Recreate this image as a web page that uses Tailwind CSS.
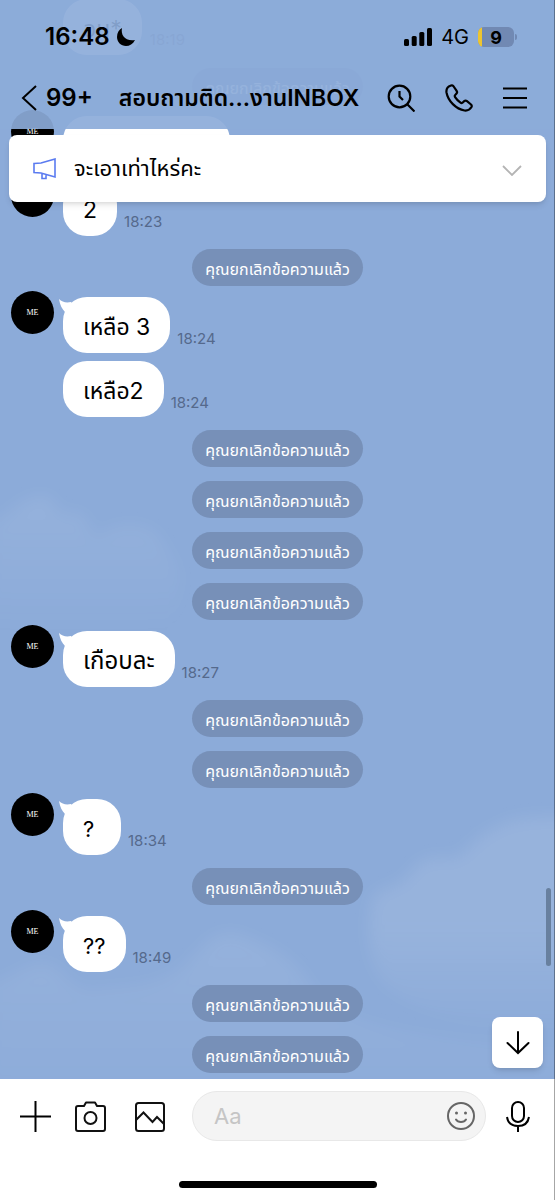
<!DOCTYPE html>
<html lang="th">
<head>
<meta charset="utf-8">
<meta name="viewport" content="width=device-width, initial-scale=1">
<title>Chat</title>
<script src="https://cdn.jsdelivr.net/npm/@tailwindcss/browser@4"></script>
</head>
<body class="bg-white font-['Inter','Noto_Sans_Thai','Noto_Sans',sans-serif] text-black">
<div class="relative flex min-h-screen flex-col overflow-hidden">

  <!-- Conversation -->
  <main class="relative flex flex-col overflow-hidden bg-[#8cabd9] pb-[6px]">
    <svg class="absolute inset-0 h-full w-full" viewBox="0 0 555 1079" preserveAspectRatio="none" aria-hidden="true">
      <defs>
        <filter id="soft" x="-20%" y="-20%" width="140%" height="140%"><feGaussianBlur stdDeviation="8"/></filter>
        <linearGradient id="fade" x1="0" y1="0" x2="0" y2="1"><stop offset="0" stop-color="#fff" stop-opacity=".08"/><stop offset="1" stop-color="#fff" stop-opacity="0"/></linearGradient>
        <linearGradient id="fade2" x1="0" y1="0" x2="0" y2="1"><stop offset="0" stop-color="#fff" stop-opacity=".1"/><stop offset=".5" stop-color="#fff" stop-opacity=".1"/><stop offset="1" stop-color="#fff" stop-opacity="0"/></linearGradient>
      </defs>
      <g filter="url(#soft)">
        <path fill="url(#fade)" d="M-10 522C8 520 15 500 42 496c18 2 10 20 24 18 20-6 22 10 26 22 12 0 20-14 46-10 26 4 24 22 36 34 12 20 4 60-10 70H-10z"/>
        <path fill="url(#fade2)" d="M575 818c-30-2-70 0-80 12-14 2-22 18-38 28-10 4-26-8-44 12-6 14-24 18-38 24-10 30-6 70 10 90 30 30 100 50 190 50z"/>
        <path fill="url(#fade)" d="M-10 984c20-4 40-22 56-20 16 4 26 30 50 26 30-4 60-2 84-20 20-16 30-40 56-36 40 14 60 26 80 60 20 30 120 50 259 54v70H-10z"/>
      </g>
    </svg>

    <ol class="relative flex flex-col">
      <li class="-mt-px flex items-end gap-2 pl-[63px]"><p class="flex h-14 items-center rounded-[24px] bg-white px-5 pt-1 text-[23px]">อน*</p><time class="pb-1 text-[15px] text-[#55698c]">18:19</time></li>
      <li class="mt-[13px] flex justify-center"><p class="flex h-[37px] items-center rounded-full bg-[#7790b8] px-[13px] pt-[2px] text-[16px] text-white">คุณยกเลิกข้อความแล้ว</p></li>
      <li class="mt-[5px] flex pl-[11px]"><span class="flex size-[43px] items-center justify-center rounded-full bg-black font-['Liberation_Serif',serif] text-[8px] text-white">ME</span><p class="mt-[6px] ml-[9px] flex h-14 items-center rounded-[24px] bg-white px-5 pt-1 text-[22px]">จะเอาเท่าไหร่คะ</p></li>
      <li class="mt-[2px] flex items-start pl-[11px]"><span class="flex size-[43px] items-center justify-center rounded-full bg-black font-['Liberation_Serif',serif] text-[8px] text-white">ME</span><p class="mt-[6px] ml-[9px] flex h-14 items-center rounded-[24px] bg-white px-5 pt-1 text-[23px]">2</p><time class="ml-[7px] self-end pb-[3px] text-[15px] text-[#55698c]">18:23</time></li>
      <li class="mt-[13px] flex justify-center"><p class="flex h-[37px] items-center rounded-full bg-[#7790b8] px-[13px] pt-[2px] text-[16px] text-white">คุณยกเลิกข้อความแล้ว</p></li>
      <li class="mt-[5px] flex items-start pl-[11px]"><span class="flex size-[43px] items-center justify-center rounded-full bg-black font-['Liberation_Serif',serif] text-[8px] text-white">ME</span><p class="relative mt-[6px] ml-[9px] flex h-14 items-center rounded-[24px] bg-white px-5 pt-1 text-[23px]"><svg class="absolute top-[2px] -left-1 h-4 w-5" viewBox="0 0 20 16" fill="#fff" aria-hidden="true"><path d="M0 0C3 3 7 4 12 3L18 10 6 13C3 10 1 6 0 0z"/></svg>เหลือ 3</p><time class="ml-[7px] self-end pb-[3px] text-[15px] text-[#55698c]">18:24</time></li>
      <li class="mt-2 flex items-end pl-[63px]"><p class="flex h-14 items-center rounded-[24px] bg-white px-5 pt-1 text-[23px]">เหลือ2</p><time class="ml-[7px] pb-[3px] text-[15px] text-[#55698c]">18:24</time></li>
      <li class="mt-[13px] flex justify-center"><p class="flex h-[37px] items-center rounded-full bg-[#7790b8] px-[13px] pt-[2px] text-[16px] text-white">คุณยกเลิกข้อความแล้ว</p></li>
      <li class="mt-[14px] flex justify-center"><p class="flex h-[37px] items-center rounded-full bg-[#7790b8] px-[13px] pt-[2px] text-[16px] text-white">คุณยกเลิกข้อความแล้ว</p></li>
      <li class="mt-[14px] flex justify-center"><p class="flex h-[37px] items-center rounded-full bg-[#7790b8] px-[13px] pt-[2px] text-[16px] text-white">คุณยกเลิกข้อความแล้ว</p></li>
      <li class="mt-[14px] flex justify-center"><p class="flex h-[37px] items-center rounded-full bg-[#7790b8] px-[13px] pt-[2px] text-[16px] text-white">คุณยกเลิกข้อความแล้ว</p></li>
      <li class="mt-[5px] flex items-start pl-[11px]"><span class="flex size-[43px] items-center justify-center rounded-full bg-black font-['Liberation_Serif',serif] text-[8px] text-white">ME</span><p class="relative mt-[6px] ml-[9px] flex h-14 items-center rounded-[24px] bg-white px-5 pt-1 text-[24px]"><svg class="absolute top-[2px] -left-1 h-4 w-5" viewBox="0 0 20 16" fill="#fff" aria-hidden="true"><path d="M0 0C3 3 7 4 12 3L18 10 6 13C3 10 1 6 0 0z"/></svg>เกือบละ</p><time class="ml-[7px] self-end pb-[3px] text-[15px] text-[#55698c]">18:27</time></li>
      <li class="mt-[13px] flex justify-center"><p class="flex h-[37px] items-center rounded-full bg-[#7790b8] px-[13px] pt-[2px] text-[16px] text-white">คุณยกเลิกข้อความแล้ว</p></li>
      <li class="mt-[14px] flex justify-center"><p class="flex h-[37px] items-center rounded-full bg-[#7790b8] px-[13px] pt-[2px] text-[16px] text-white">คุณยกเลิกข้อความแล้ว</p></li>
      <li class="mt-[5px] flex items-start pl-[11px]"><span class="flex size-[43px] items-center justify-center rounded-full bg-black font-['Liberation_Serif',serif] text-[8px] text-white">ME</span><p class="relative mt-[6px] ml-[9px] flex h-14 min-w-[58px] items-center rounded-[24px] bg-white px-5 pt-1 text-[22px]"><svg class="absolute top-[2px] -left-1 h-4 w-5" viewBox="0 0 20 16" fill="#fff" aria-hidden="true"><path d="M0 0C3 3 7 4 12 3L18 10 6 13C3 10 1 6 0 0z"/></svg>?</p><time class="ml-[7px] self-end pb-[3px] text-[15px] text-[#55698c]">18:34</time></li>
      <li class="mt-[13px] flex justify-center"><p class="flex h-[37px] items-center rounded-full bg-[#7790b8] px-[13px] pt-[2px] text-[16px] text-white">คุณยกเลิกข้อความแล้ว</p></li>
      <li class="mt-[5px] flex items-start pl-[11px]"><span class="flex size-[43px] items-center justify-center rounded-full bg-black font-['Liberation_Serif',serif] text-[8px] text-white">ME</span><p class="relative mt-[6px] ml-[9px] flex h-14 min-w-[58px] items-center rounded-[24px] bg-white px-5 pt-1 text-[22px]"><svg class="absolute top-[2px] -left-1 h-4 w-5" viewBox="0 0 20 16" fill="#fff" aria-hidden="true"><path d="M0 0C3 3 7 4 12 3L18 10 6 13C3 10 1 6 0 0z"/></svg>??</p><time class="ml-[7px] self-end pb-[3px] text-[15px] text-[#55698c]">18:49</time></li>
      <li class="mt-[13px] flex justify-center"><p class="flex h-[37px] items-center rounded-full bg-[#7790b8] px-[13px] pt-[2px] text-[16px] text-white">คุณยกเลิกข้อความแล้ว</p></li>
      <li class="mt-[14px] flex justify-center"><p class="flex h-[37px] items-center rounded-full bg-[#7790b8] px-[13px] pt-[2px] text-[16px] text-white">คุณยกเลิกข้อความแล้ว</p></li>
    </ol>

    <div class="absolute right-[4px] bottom-[113px] h-[78px] w-[5px] rounded-full bg-[#68809f]"></div>
    <button aria-label="Scroll to latest" class="absolute right-3 bottom-[11px] flex size-[51px] items-center justify-center rounded-lg bg-white shadow-md">
      <svg class="size-6" viewBox="0 0 24 24" fill="none" stroke="#000" stroke-width="2" stroke-linecap="round" aria-hidden="true"><path d="M12 1v21M1.500 12 12 22l10.500-10"/></svg>
    </button>
  </main>

  <!-- Translucent header over the conversation -->
  <header class="absolute inset-x-0 top-0 h-[129px] bg-[#8cabd9]/92">
    <div class="flex items-center justify-between pt-[21px] pr-[38px] pl-[45px]">
      <div class="flex h-8 items-center gap-[6px] text-[24px] font-semibold">16:48
        <svg class="size-5" viewBox="0 0 20 20" aria-hidden="true"><path d="M6 1C4.500 8 9 14.500 19 13 17 17 13.500 19 10 19 5 19 1 15 1 10 1 6 3 2.500 6 1z"/></svg>
      </div>
      <div class="flex h-8 items-center">
        <svg class="h-[18px] w-7" viewBox="0 0 28 18" aria-hidden="true"><rect y="11" width="5" height="7" rx="1.500"/><rect x="7.700" y="8" width="5" height="10" rx="1.500"/><rect x="15.300" y="4" width="5" height="14" rx="1.500"/><rect x="23" width="5" height="18" rx="1.500"/></svg>
        <span class="ml-[9px] text-[20px]">4G</span>
        <div class="relative ml-[9px] flex h-5 w-9 items-center justify-center overflow-hidden rounded-[6px] bg-[#7189b3]"><span class="absolute inset-y-0 left-0 w-1 bg-[#eec530]"></span><span class="text-[18px] font-bold">9</span></div>
        <span class="ml-px h-[6px] w-[2px] rounded-r-full bg-[#7189b3]"></span>
      </div>
    </div>
    <nav class="mt-[21px] flex h-12 items-center pr-7 pl-[21px]">
      <button class="flex items-center gap-[9px] text-[24px] font-semibold"><svg class="h-[26px] w-4" viewBox="0 0 16 26" fill="none" stroke="#000" stroke-width="2" aria-hidden="true"><path d="M15 1 2 13l13 12"/></svg>99+</button>
      <h1 class="ml-[26px] flex-1 text-[23px] font-semibold whitespace-nowrap">สอบถามติด...งานINBOX</h1>
      <div class="flex items-center gap-[30px]">
        <button aria-label="Search"><svg class="size-7" viewBox="0 0 28 28" fill="none" stroke="#000" stroke-width="2.200" aria-hidden="true"><circle cx="12.500" cy="12.500" r="10.800"/><path d="M20.500 20.500l7 7M12.500 7v5.500l3.500 3.500"/></svg></button>
        <button aria-label="Call"><svg class="size-7" viewBox="0 0 28 28" fill="none" stroke="#000" stroke-width="2.200" stroke-linejoin="round" aria-hidden="true"><path d="M6 1.500C3 2.500 1 5 1.500 8.500 3 17 11 25 19.500 26.500c3 .4 5.500-1 7-3.500.5-1 .2-1.800-.5-2.500l-4-3.300c-1-.8-2-.7-2.800 0l-1.700 1.500c-.7.500-1.300.5-2 0-2.200-1.600-4-3.400-5.400-5.600-.5-.8-.5-1.400 0-2l1.400-1.600c.8-.9.800-1.800 0-2.800L8.300 2C7.600 1.300 6.900 1.200 6 1.500z"/></svg></button>
        <button aria-label="Menu"><svg class="size-6" viewBox="0 0 24 24" fill="none" stroke="#000" stroke-width="2.200" aria-hidden="true"><path d="M0 2.500h24M0 12h24M0 21.500h24"/></svg></button>
      </div>
    </nav>
  </header>

  <!-- Pinned announcement -->
  <section class="absolute inset-x-[9px] top-[135px] flex h-[67px] items-center rounded-lg bg-white px-6 shadow-md">
    <svg class="h-[22px] w-[23px]" viewBox="0 0 23 22" fill="none" stroke="#5b7bf0" stroke-width="1.600" aria-hidden="true"><path d="M1 5.500 8 5 22 1v18L8 15 1 14.500zM9 15.500V20.500h4V16.500"/></svg>
    <p class="ml-[18px] flex-1 text-[22px]">จะเอาเท่าไหร่คะ</p>
    <button aria-label="Expand"><svg class="mt-1 h-[11px] w-5" viewBox="0 0 20 11" fill="none" stroke="#b4b4b4" stroke-width="1.800" aria-hidden="true"><path d="M1 1l9 9 9-9"/></svg></button>
  </section>

  <!-- Composer -->
  <footer class="flex flex-1 flex-col bg-white">
    <form class="flex items-center pt-[12px] pr-[25px] pl-5">
      <button type="button" aria-label="Add"><svg class="size-[31px]" viewBox="0 0 31 31" stroke="#000" stroke-width="2" aria-hidden="true"><path d="M15.500 0v31M0 15.500h31"/></svg></button>
      <button type="button" aria-label="Camera" class="ml-6"><svg class="size-[31px]" viewBox="0 0 31 31" fill="none" stroke="#111" stroke-width="2" stroke-linejoin="round" aria-hidden="true"><path d="M3 5h6l2-3.500h9L22 5h6q2 0 2 2v21q0 2-2 2H3q-2 0-2-2V7q0-2 2-2z"/><circle cx="15.500" cy="17" r="6"/></svg></button>
      <button type="button" aria-label="Gallery" class="ml-[29px]"><svg class="h-[31px] w-[30px]" viewBox="0 0 30 31" fill="none" stroke="#111" stroke-width="2" aria-hidden="true"><rect x="1" y="2" width="28" height="28" rx="2.500"/><path d="M1 19l7.500-7.500 9 9.500 4.500-5 7 7"/></svg></button>
      <div class="relative ml-[27px] flex-1">
        <input type="text" aria-label="Message" placeholder="Aa" class="block h-[50px] w-full rounded-full border border-[#e8e8e8] bg-[#f4f4f4] pr-12 pl-[21px] text-[22px] placeholder:text-[#c5c5c5]">
        <button type="button" aria-label="Stickers" class="absolute top-[11px] right-[11px]"><svg class="size-7" viewBox="0 0 28 28" fill="none" stroke="#666" stroke-width="2" stroke-linecap="round" aria-hidden="true"><circle cx="14" cy="14" r="13"/><path d="M9 17.500c2 3.400 8 3.400 10 0"/><circle cx="9.500" cy="11" r="1.500" fill="#666" stroke="none"/><circle cx="18.500" cy="11" r="1.500" fill="#666" stroke="none"/></svg></button>
      </div>
      <button type="button" aria-label="Voice message" class="ml-5"><svg class="h-[31px] w-6" viewBox="0 0 24 31" fill="none" stroke="#000" stroke-width="2" aria-hidden="true"><rect x="6" y="1" width="12" height="20" rx="6"/><path d="M1 16c1 6 5 9 11 9s10-3 11-9M12 25v6"/></svg></button>
    </form>
    <div class="mx-auto mt-auto mb-3 h-[7px] w-[198px] rounded-full bg-black"></div>
  </footer>

  <div class="pointer-events-none absolute inset-y-0 right-0 w-px bg-black/35"></div>
</div>
</body>
</html>
